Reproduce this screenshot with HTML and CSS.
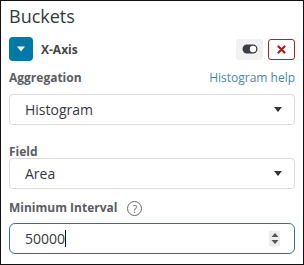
FILE: index.html
```html
<!DOCTYPE html>
<html lang="en">
<head>
  <meta charset="UTF-8" />
  <title>Buckets</title>
  <link rel="stylesheet" href="styles.css">
</head>
<body>
  <div class="panel">
    <h2 class="title">Buckets</h2>

    <div class="aggHead">
      <button class="toggleBtn">
        <svg width="10" height="6" viewBox="0 0 10 6"><path d="M1 0.5 L9 0.5 L5 5.5 Z" fill="#fff"/></svg>
      </button>
      <span class="aggName">X-Axis</span>
      <span class="spacer"></span>
      <button class="enableBtn">
        <svg width="16" height="10" viewBox="0 0 16 10">
          <rect x="0.5" y="0.5" width="15" height="9" rx="4.5" fill="#3b3d44"/>
          <circle cx="11" cy="5" r="3.2" fill="#fff"/>
        </svg>
      </button>
      <button class="removeBtn">
        <svg width="9" height="9" viewBox="0 0 9 9"><path d="M1.5 1.5 L7.5 7.5 M7.5 1.5 L1.5 7.5" stroke="#b4161b" stroke-width="2.2" stroke-linecap="round"/></svg>
      </button>
    </div>

    <div class="labelRow">
      <label class="fieldLabel">Aggregation</label>
      <a class="helpLink" href="#">Histogram help</a>
    </div>
    <div class="selectBox agg">
      <span>Histogram</span>
      <span class="caret"></span>
    </div>

    <label class="fieldLabel field">Field</label>
    <div class="selectBox">
      <span>Area</span>
      <span class="caret"></span>
    </div>

    <div class="labelRow interval">
      <label class="fieldLabel">Minimum Interval</label>
      <span class="helpIcon">?</span>
    </div>
    <div class="numberBox">
      <span class="value">50000</span><span class="cursor"></span>
      <span class="spacer"></span>
      <span class="spinner">
        <svg width="8" height="13" viewBox="0 0 8 13">
          <path d="M0.5 5 L4 1 L7.5 5 Z" fill="#555"/>
          <path d="M0.5 8 L4 12 L7.5 8 Z" fill="#555"/>
        </svg>
      </span>
    </div>
  </div>
</body>
</html>
```

FILE: styles.css
```css
body {
  margin: 0;
  font-family: "Open Sans", "DejaVu Sans", sans-serif;
  background: #fff;
  color: #343741;
}
.panel {
  width: 304px;
  height: 265px;
  box-sizing: border-box;
  border: 1px solid #111;
  padding: 3px 8px 0 8px;
  display: flex;
  flex-direction: column;
}
.title {
  margin: 0;
  font-size: 18px;
  line-height: 24px;
  font-weight: 400;
  color: #343741;
}
.aggHead {
  margin-top: 9px;
  height: 24px;
  display: flex;
  align-items: center;
}
.toggleBtn {
  width: 24px;
  height: 24px;
  border: none;
  border-radius: 4px;
  background: #0079a5;
  padding: 0;
  display: flex;
  align-items: center;
  justify-content: center;
}
.aggName {
  margin-left: 8px;
  font-size: 12px;
  font-weight: 700;
  color: #444;
}
.spacer {
  flex: 1;
}
.enableBtn,
.removeBtn {
  width: 27px;
  height: 21px;
  padding: 0;
  border-radius: 3px;
  display: flex;
  align-items: center;
  justify-content: center;
}
.enableBtn {
  border: none;
  background: #f1f1f1;
}
.removeBtn {
  margin-left: 5px;
  border: 1px solid #a3262b;
  background: #fff;
}
.labelRow {
  margin-top: 10px;
  display: flex;
  align-items: center;
  height: 14px;
}
.fieldLabel {
  font-size: 12px;
  line-height: 12px;
  font-weight: 700;
  color: #5a5c63;
}
.helpLink {
  margin-left: auto;
  font-size: 12px;
  line-height: 14px;
  color: #3f8aa6;
  text-decoration: none;
}
.selectBox {
  height: 31px;
  box-sizing: border-box;
  border: 1px solid #dcdcdc;
  border-radius: 4px;
  padding: 0 12px 0 15px;
  display: flex;
  align-items: center;
  justify-content: space-between;
  font-size: 14px;
  color: #343741;
}
.selectBox.agg {
  margin-top: 9px;
}
.caret {
  width: 0;
  height: 0;
  border-left: 4px solid transparent;
  border-right: 4px solid transparent;
  border-top: 5px solid #333;
}
.field {
  margin-top: 21px;
}
.interval {
  margin-top: 12px;
}
.helpIcon {
  margin-left: 10px;
  width: 13px;
  height: 13px;
  border: 1.3px solid #666;
  border-radius: 50%;
  font-size: 11px;
  line-height: 13px;
  text-align: center;
  color: #666;
}
.numberBox {
  margin-top: 8px;
  height: 31px;
  box-sizing: border-box;
  border: 1px solid #3b6f7c;
  border-radius: 6px;
  padding: 0 14px 0 15px;
  display: flex;
  align-items: center;
  font-size: 14px;
  color: #343741;
}
.cursor {
  width: 1px;
  height: 17px;
  background: #111;
}
.spinner {
  width: 11px;
  height: 15px;
  background: #ededed;
  display: flex;
  align-items: center;
  justify-content: center;
}
```
